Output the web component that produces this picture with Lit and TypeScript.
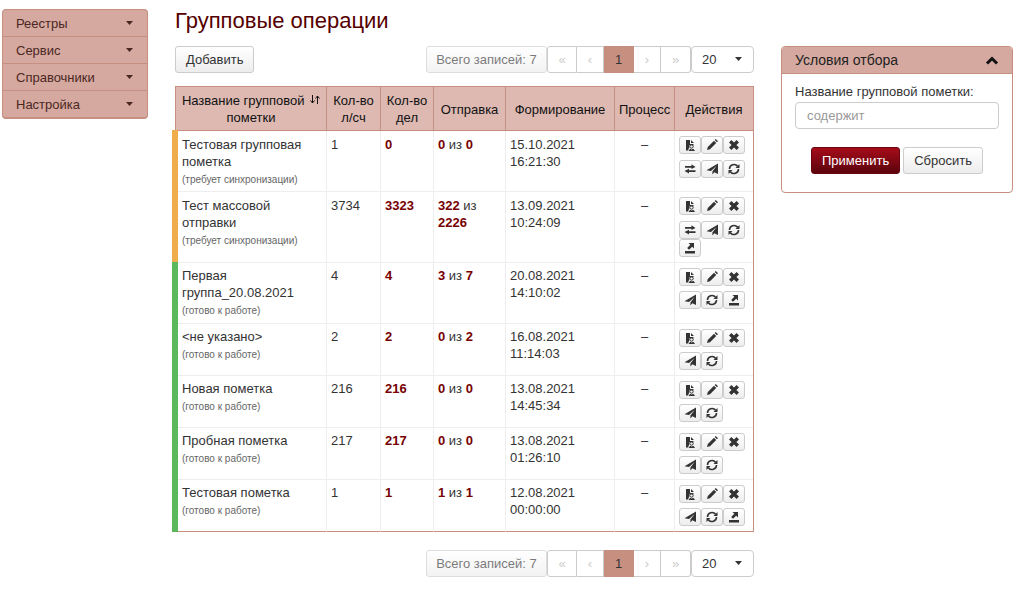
import { LitElement, html, css, svg } from "lit";
import { customElement, property } from "lit/decorators.js";

type IconName = "search" | "edit" | "remove" | "sync" | "send" | "refresh" | "export";

const ICONS: Record<IconName, unknown> = {
  search: svg`<path d="M2 1h4v4h3.500v1.200H5.200V8.500L4 11.500H2z M7 1l3 3H7z" /><circle cx="7.500" cy="7.500" r="1.700" fill="none" stroke="#333" /><path d="M4.500 12l1.500-2h1l.8.700.8-.700h1L11 12z" />`,
  edit: svg`<path d="M1 11l.8-3L8 1.800 10.200 4 4 10.200z M8.700 1.100L9.800 0 12 2.200 10.900 3.300z" />`,
  remove: svg`<path d="M3.400 1L6 3.600 8.600 1 11 3.400 8.400 6 11 8.600 8.600 11 6 8.400 3.400 11 1 8.600 3.600 6 1 3.400z" />`,
  sync: svg`<path d="M1 3h6.500V1.200L11.500 4 7.500 6V4.700H1z M11.500 9H5v1.500L.5 8 5 5.800V7.300h6.500z" />`,
  send: svg`<path d="M12 .500v10.500L8.300 9.200 6.400 11.500V8.500L10.500 3 5 8 .500 7.300z" />`,
  refresh: svg`<path d="M1.500 6A4.500 4.500 0 0 1 9.600 3.300M10.500 6A4.500 4.500 0 0 1 2.400 8.700" fill="none" stroke="#333" stroke-width="1.600" /><path d="M11.500 1v4h-4z M.5 11V7h4z" />`,
  export: svg`<path d="M1 9h10v2.500H1z M4.500 1H10v5.500L8.200 4.700 5 7.800 3.200 6 6.300 2.800z" />`,
};

interface Row {
  name: string;
  pending: boolean;
  accounts: number;
  cases: number;
  sent: number;
  total: number;
  date: string;
  time: string;
  actions: IconName[];
}

const ROWS: Row[] = [
  { name: "Тестовая групповая пометка", pending: true, accounts: 1, cases: 0, sent: 0, total: 0, date: "15.10.2021", time: "16:21:30", actions: ["sync", "send", "refresh"] },
  { name: "Тест массовой отправки", pending: true, accounts: 3734, cases: 3323, sent: 322, total: 2226, date: "13.09.2021", time: "10:24:09", actions: ["sync", "send", "refresh", "export"] },
  { name: "Первая группа_20.08.2021", pending: false, accounts: 4, cases: 4, sent: 3, total: 7, date: "20.08.2021", time: "14:10:02", actions: ["send", "refresh", "export"] },
  { name: "<не указано>", pending: false, accounts: 2, cases: 2, sent: 0, total: 2, date: "16.08.2021", time: "11:14:03", actions: ["send", "refresh"] },
  { name: "Новая пометка", pending: false, accounts: 216, cases: 216, sent: 0, total: 0, date: "13.08.2021", time: "14:45:34", actions: ["send", "refresh"] },
  { name: "Пробная пометка", pending: false, accounts: 217, cases: 217, sent: 0, total: 0, date: "13.08.2021", time: "01:26:10", actions: ["send", "refresh"] },
  { name: "Тестовая пометка", pending: false, accounts: 1, cases: 1, sent: 1, total: 1, date: "12.08.2021", time: "00:00:00", actions: ["send", "refresh", "export"] },
];

const TITLES: Record<IconName, string> = {
  search: "Просмотр",
  edit: "Изменить",
  remove: "Удалить",
  sync: "Синхронизировать",
  send: "Отправить",
  refresh: "Обновить",
  export: "Выгрузить",
};

const base = css`
  * { box-sizing: border-box; }
  button, input, select { font: inherit; color: inherit; margin: 0; }
  .btn {
    height: 27px;
    padding: 0 10px;
    border: 1px solid #ccc;
    border-radius: 3px;
    background: linear-gradient(#fff, #ededed);
    color: #333;
    white-space: nowrap;
  }
`;

@customElement("side-menu")
class SideMenu extends LitElement {
  static styles = [base, css`
    :host { display: block; }
    .menu { margin: 0; padding: 0; list-style: none; border: 1px solid #c78f80; border-bottom-width: 2px; border-radius: 4px; background: #d5a9a0; }
    .item + .item { border-top: 1px solid #c78f80; }
    .link { display: flex; align-items: center; justify-content: space-between; height: 26px; padding: 0 14px 0 13px; color: #4b2722; text-decoration: none; }
  `];
  render() {
    return html`<nav><ul class="menu">
      ${["Реестры", "Сервис", "Справочники", "Настройка"].map((t) => html`<li class="item"><a class="link" href="#">${t}<svg width="7" height="4" viewBox="0 0 7 4" fill="#4b2722"><path d="M0 0h7L3.500 4z" /></svg></a></li>`)}
    </ul></nav>`;
  }
}

@customElement("page-bar")
class PageBar extends LitElement {
  @property() label = "";
  static styles = [base, css`
    :host { display: flex; justify-content: flex-end; }
    .total { width: 121px; opacity: .65; padding: 0; }
    .pages { display: flex; }
    .page { height: 27px; width: 27px; padding: 0; border: 1px solid #ccc; border-left-width: 0; background: #fff; color: #ccc; }
    .page:first-child { width: 30px; border-left-width: 1px; border-radius: 3px 0 0 3px; }
    .page:last-child { width: 30px; border-radius: 0 3px 3px 0; }
    .page.current { width: 30px; background: #c78f80; border-color: #c78f80; color: #333; }
    .size { position: relative; width: 63px; }
    .select { appearance: none; width: 100%; height: 27px; padding: 0 20px 0 10px; border: 1px solid #ccc; border-radius: 4px; background: #fff; color: #333; }
    .caret { position: absolute; right: 12px; top: 11px; pointer-events: none; }
  `];
  render() {
    return html`
      <button class="btn total" disabled>Всего записей: 7</button>
      <div class="pages">
        <button class="page">«</button><button class="page">‹</button><button class="page current">1</button><button class="page">›</button><button class="page">»</button>
      </div>
      <div class="size">
        <select class="select" aria-label=${this.label}><option>20</option><option>50</option></select>
        <svg class="caret" width="7" height="4" viewBox="0 0 7 4" fill="#333"><path d="M0 0h7L3.500 4z" /></svg>
      </div>`;
  }
}

@customElement("filter-panel")
class FilterPanel extends LitElement {
  static styles = [base, css`
    :host { display: block; }
    .panel { border: 1px solid #c78f80; border-radius: 4px; background: #fff; }
    .head { display: flex; align-items: center; justify-content: space-between; height: 27px; padding: 0 13px; border-bottom: 1px solid #c78f80; background: #d5a9a0; color: #222; border-radius: 3px 3px 0 0; }
    .title { margin: 0; font-size: 14px; font-weight: 400; }
    .toggle { display: flex; padding: 0; border: 0; background: none; }
    .body { padding: 8px 13px 18px; }
    .label { display: block; margin-bottom: 1px; line-height: 19px; }
    .input { display: block; width: 100%; height: 27px; padding: 0 11px; border: 1px solid #ccc; border-radius: 4px; background: #fff; }
    .input::placeholder { color: #999; opacity: 1; }
    .actions { display: flex; justify-content: center; gap: 3px; margin-top: 18px; }
    .primary { border-color: #6a0510; background: linear-gradient(#a60c1a, #5b040d); color: #fff; }
  `];
  render() {
    return html`<section class="panel">
      <header class="head"><h2 class="title">Условия отбора</h2>
        <button class="toggle" aria-label="Свернуть"><svg width="14" height="9" viewBox="0 0 14 9"><path d="M2 7.500l5-5 5 5" fill="none" stroke="#111" stroke-width="3" /></svg></button></header>
      <div class="body">
        <label class="label" for="mark">Название групповой пометки:</label>
        <input class="input" id="mark" type="text" placeholder="содержит" />
        <div class="actions"><button class="btn primary">Применить</button><button class="btn">Сбросить</button></div>
      </div>
    </section>`;
  }
}

@customElement("marks-table")
class MarksTable extends LitElement {
  static styles = [base, css`
    :host { display: block; }
    .table { width: 100%; table-layout: fixed; border-collapse: separate; border-spacing: 0; border: solid #c78f80; border-width: 1px 1px 0 0; color: #333; line-height: 17px; }
    .c-acc { width: 54px; } .c-case { width: 53px; } .c-sent { width: 72px; } .c-form { width: 109px; } .c-proc { width: 60px; } .c-act { width: 79px; }
    .th { padding: 5px 4px 4px; font-weight: 400; color: #111; background: #ddb9b1; border: solid #c78f80; border-width: 0 0 1px 1px; }
    .sort { margin-left: 2px; vertical-align: 1px; }
    .td { padding: 4px 4px 5px; vertical-align: top; border: solid #eee; border-width: 0 0 1px 1px; }
    .pending .td, .row .tools { padding-top: 5px; }
    .row:last-child .td { border-bottom-color: #c78f80; }
    .row .name { position: relative; padding-left: 7px; padding-bottom: 3px; border-left-width: 0; }
    .pending .name { padding-bottom: 2px; }
    .name::before { content: ""; position: absolute; left: -3px; top: -1px; bottom: 0; width: 6px; background: #5cb85c; }
    .pending .name::before { background: #f0ad4e; }
    .row:last-child .name::before { bottom: -1px; }
    .state { display: block; font-size: 10px; line-height: 19px; color: #666; }
    .num { color: #700; }
    .center { text-align: center; }
    .group { display: flex; flex-wrap: wrap; }
    .group + .group { margin-top: 5px; }
    .pending .group + .group { margin-top: 6px; }
    .icon { display: flex; align-items: center; justify-content: center; width: 22px; height: 18px; padding: 0; border: 1px solid #ccc; border-radius: 3px; background: linear-gradient(#fff, #ededed); }
  `];
  icon(name: IconName) {
    return html`<button class="icon" aria-label=${TITLES[name]}><svg width="12" height="12" viewBox="0 0 12 12" fill="#333">${ICONS[name]}</svg></button>`;
  }
  render() {
    return html`<table class="table">
      <colgroup><col /><col class="c-acc" /><col class="c-case" /><col class="c-sent" /><col class="c-form" /><col class="c-proc" /><col class="c-act" /></colgroup>
      <thead><tr>
        <th class="th">Название групповой <svg class="sort" width="10" height="9" viewBox="0 0 10 9"><path d="M2.500 0v8M.5 5.500l2 2.500 2-2.500M7.500 9V1M5.500 3.500l2-2.500 2 2.500" fill="none" stroke="#111" /></svg> пометки</th>
        <th class="th">Кол-во л/сч</th><th class="th">Кол-во дел</th><th class="th">Отправка</th><th class="th">Формирование</th><th class="th">Процесс</th><th class="th">Действия</th>
      </tr></thead>
      <tbody>${ROWS.map((r) => html`<tr class="row ${r.pending ? "pending" : ""}">
        <td class="td name">${r.name}<span class="state">${r.pending ? "(требует синхронизации)" : "(готово к работе)"}</span></td>
        <td class="td">${r.accounts}</td>
        <td class="td"><b class="num">${r.cases}</b></td>
        <td class="td"><b class="num">${r.sent}</b> из <b class="num">${r.total}</b></td>
        <td class="td">${r.date} ${r.time}</td>
        <td class="td center">–</td>
        <td class="td tools"><div class="group">${(["search", "edit", "remove"] as IconName[]).map((n) => this.icon(n))}</div><div class="group">${r.actions.map((n) => this.icon(n))}</div></td>
      </tr>`)}</tbody>
    </table>`;
  }
}

@customElement("app-root")
class AppRoot extends LitElement {
  static styles = [base, css`
    :host { display: block; font: 13px/17px "Liberation Sans", Arial, sans-serif; color: #333; }
    .layout { display: grid; grid-template-columns: 146px minmax(0, 1fr) 232px; column-gap: 27px; align-items: start; padding: 9px 6px 18px 2px; }
    .title { margin: 0; font-size: 22px; line-height: 24px; font-weight: 400; color: #500; }
    .tools { display: flex; justify-content: space-between; margin: 13px 0; }
    .bottom { margin-top: 18px; }
    .side { padding-top: 37px; }
  `];
  render() {
    return html`<div class="layout">
      <side-menu></side-menu>
      <main>
        <h1 class="title">Групповые операции</h1>
        <div class="tools"><button class="btn">Добавить</button><page-bar label="Записей на странице"></page-bar></div>
        <marks-table></marks-table>
        <page-bar class="bottom" label="Записей на странице, внизу"></page-bar>
      </main>
      <filter-panel class="side"></filter-panel>
    </div>`;
  }
}
